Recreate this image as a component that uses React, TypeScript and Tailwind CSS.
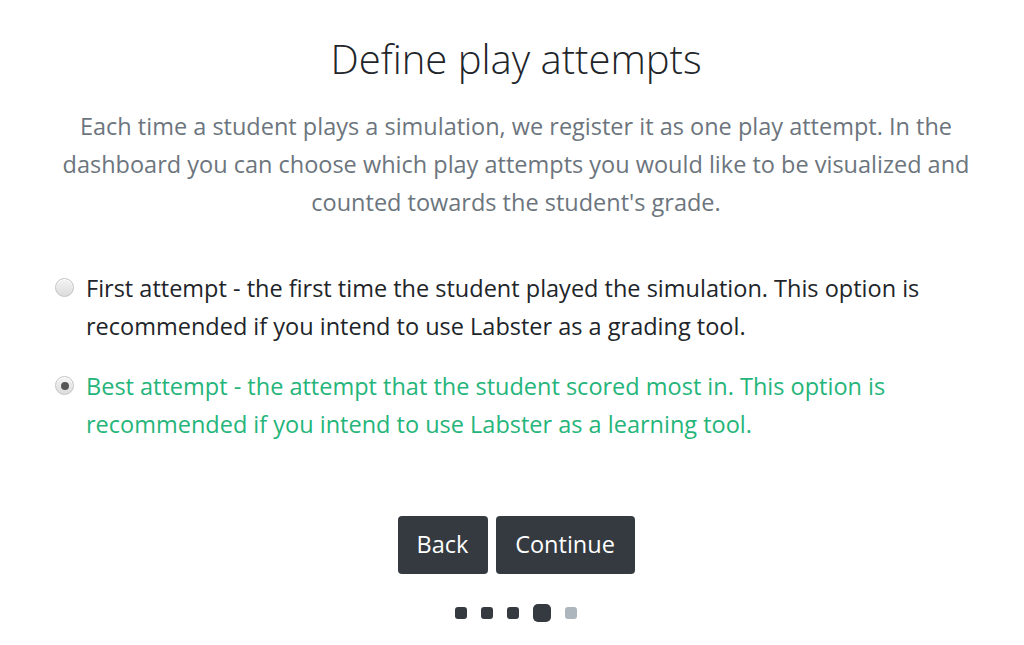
import React, { useState } from "react";

const options = [
  {
    id: "first",
    text: "First attempt - the first time the student played the simulation. This option is recommended if you intend to use Labster as a grading tool.",
  },
  {
    id: "best",
    text: "Best attempt - the attempt that the student scored most in. This option is recommended if you intend to use Labster as a learning tool.",
  },
];

function Radio({ checked }: { checked: boolean }) {
  return (
    <span className="mt-[9px] flex h-[19px] w-[19px] shrink-0 items-center justify-center rounded-full border border-[#c4c4c4] bg-gradient-to-b from-[#f4f4f4] to-[#dcdcdc] shadow-[inset_0_1px_0_#fff]">
      {checked && <span className="h-[8px] w-[8px] rounded-full bg-[#555]" />}
    </span>
  );
}

export default function App() {
  const [selected, setSelected] = useState("best");
  const step = 3;

  return (
    <div
      className="min-h-[645px] bg-white pl-[8px]"
      style={{ fontFamily: '"Open Sans", "Noto Sans", sans-serif' }}
    >
      <div className="mx-auto flex w-[960px] flex-col items-center pt-[33px]">
        <h1 className="text-[40px] font-light leading-[52px] text-[#212529]">
          Define play attempts
        </h1>
        <p className="mt-[22px] whitespace-nowrap text-center text-[23.5px] leading-[38px] text-[#6c757d]">
          Each time a student plays a simulation, we register it as one play attempt. In the
          <br />
          dashboard you can choose which play attempts you would like to be visualized and
          <br />
          counted towards the student's grade.
        </p>

        <div className="mt-[48px] flex w-full flex-col gap-[22px] pl-[19px] pr-[30px]">
          {options.map((o) => {
            const active = selected === o.id;
            return (
              <label
                key={o.id}
                onClick={() => setSelected(o.id)}
                className="flex cursor-pointer items-start gap-[12px]"
              >
                <Radio checked={active} />
                <span
                  className={
                    "text-[23.5px] leading-[38px] " +
                    (active ? "text-[#25b57a]" : "text-[#212529]")
                  }
                >
                  {o.text}
                </span>
              </label>
            );
          })}
        </div>

        <div className="mt-[73px] flex gap-[8px]">
          <button className="h-[58px] w-[90px] rounded-[4px] bg-[#343a40] text-[23.5px] text-white">
            Back
          </button>
          <button className="h-[58px] w-[139px] rounded-[4px] bg-[#343a40] text-[23.5px] text-white">
            Continue
          </button>
        </div>

        <div className="mt-[30px] flex items-center gap-[14px]">
          {[0, 1, 2, 3, 4].map((i) =>
            i === step ? (
              <span key={i} className="h-[18px] w-[18px] rounded-[5px] bg-[#343a40]" />
            ) : i < step ? (
              <span key={i} className="h-[12px] w-[12px] rounded-[3px] bg-[#343a40]" />
            ) : (
              <span key={i} className="h-[12px] w-[12px] rounded-[3px] bg-[#adb5bd]" />
            )
          )}
        </div>
      </div>
    </div>
  );
}
